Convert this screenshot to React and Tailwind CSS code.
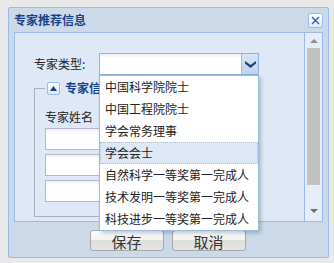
import React from "react";

const items = [
  "中国科学院院士",
  "中国工程院院士",
  "学会常务理事",
  "学会会士",
  "自然科学一等奖第一完成人",
  "技术发明一等奖第一完成人",
  "科技进步一等奖第一完成人",
];

function Btn({ children }) {
  return (
    <button className="w-[74px] h-[21px] rounded-[3px] border border-[#a8a8a8] bg-[linear-gradient(to_bottom,#fbfbfb_0%,#f3f3f3_45%,#dedede_50%,#e4e4e4_100%)] text-[15px] leading-[19px] text-[#333] flex items-center justify-center pt-[1px]">
      {children}
    </button>
  );
}

export default function App() {
  return (
    <div
      className="w-[334px] h-[263px] bg-[#e9e9e9] pt-[7px] pl-[8px] overflow-hidden"
      style={{ fontFamily: '"Noto Sans CJK SC", "Noto Sans", sans-serif' }}
    >
      <div className="w-[321px] h-[251px] border border-[#99bbe8] rounded-[2px] bg-[#ccd9e8] flex flex-col">
        {/* header */}
        <div className="h-[24px] flex items-center justify-between pl-[5px] pr-[5px]">
          <span className="text-[12px] font-bold text-[#15428b] leading-none">专家推荐信息</span>
          <div className="w-[15px] h-[15px] rounded-[2px] border border-[#99bbe8] bg-[linear-gradient(to_bottom,#ffffff,#dfe8f6)] flex items-center justify-center">
            <svg width="9" height="9" viewBox="0 0 9 9">
              <path d="M1 1 L8 8 M8 1 L1 8" stroke="#3b5f9c" strokeWidth="1.4" />
            </svg>
          </div>
        </div>
        {/* body */}
        <div className="mx-[5px] h-[190px] border border-[#99bbe8] bg-[#dfe8f6] flex">
          <div className="flex-1 relative">
            <div className="mt-[20px] ml-[19px] flex items-center">
              <span className="w-[65px] text-[12px] text-[#222] leading-none">专家类型:</span>
              <div className="relative w-[160px] h-[22px] border border-[#8eb3df] bg-[linear-gradient(to_bottom,#efefef,#ffffff_4px)] flex z-10">
                <div className="flex-1" />
                <div className="w-[17px] h-full border-l border-[#99bbe8] bg-[linear-gradient(to_bottom,#d7e4f3,#bfd3ec)] flex items-center justify-center">
                  <svg width="11" height="7" viewBox="0 0 11 7">
                    <polygon points="0,0 5.5,4 11,0 11,2.5 5.5,7 0,2.5" fill="#1f3f7a" />
                  </svg>
                </div>
                <div className="absolute left-[-1px] top-[21px] w-[160px] border border-[#99bbe8] bg-white shadow-[2px_2px_4px_rgba(0,0,0,0.22)]">
                  {items.map((t, i) => (
                    <div
                      key={t}
                      className={
                        i === 3
                          ? "h-[22px] pl-[4px] flex items-center text-[12px] text-[#222] bg-[#dfe8f6] border border-dotted border-[#a3bae9]"
                          : "h-[22px] pl-[5px] flex items-center text-[12px] text-[#222]"
                      }
                    >
                      {t}
                    </div>
                  ))}
                </div>
              </div>
            </div>
            <fieldset className="mt-[6px] ml-[19px] w-[217px] border border-[#a9b0bc] px-[10px] pb-[14px]">
              <legend className="px-[2px] flex items-center h-[14px]">
                <span className="w-[13px] h-[13px] rounded-[2px] border border-[#99bbe8] bg-[linear-gradient(to_bottom,#ffffff,#dbe5f3)] flex items-center justify-center">
                  <svg width="7" height="5" viewBox="0 0 7 5">
                    <polygon points="3.5,0 7,5 0,5" fill="#15428b" />
                  </svg>
                </span>
                <span className="ml-[5px] text-[12px] font-bold text-[#15428b] leading-none">专家信息</span>
              </legend>
              <div className="pt-[12px] h-[32px] flex items-center text-[12px] text-[#222]">专家姓名</div>
              <div className="mt-[1px] flex flex-col gap-[4px]">
                <div className="w-[160px] h-[22px] border border-[#b5b8c8] bg-[linear-gradient(to_bottom,#efefef,#ffffff_4px)]" />
                <div className="w-[160px] h-[22px] border border-[#b5b8c8] bg-[linear-gradient(to_bottom,#efefef,#ffffff_4px)]" />
                <div className="w-[160px] h-[22px] border border-[#b5b8c8] bg-[linear-gradient(to_bottom,#efefef,#ffffff_4px)]" />
              </div>
            </fieldset>
          </div>
          {/* scrollbar */}
          <div className="w-[18px] border-l border-[#99bbe8] bg-[#e6edf7] flex flex-col items-center">
            <div className="h-[15px] flex items-center justify-center">
              <svg width="8" height="4" viewBox="0 0 8 4">
                <polygon points="4,0 8,4 0,4" fill="#8f8f8f" />
              </svg>
            </div>
            <div className="w-[13px] h-[137px] bg-[#c1c1c1]" />
            <div className="flex-1" />
            <div className="h-[15px] flex items-center justify-center mb-[3px]">
              <svg width="8" height="4" viewBox="0 0 8 4">
                <polygon points="0,0 8,0 4,4" fill="#6f6f6f" />
              </svg>
            </div>
          </div>
        </div>
        {/* footer */}
        <div className="flex-1 flex justify-center gap-[8px] pt-[8px] pr-[2px]">
          <Btn>保存</Btn>
          <Btn>取消</Btn>
        </div>
      </div>
    </div>
  );
}
